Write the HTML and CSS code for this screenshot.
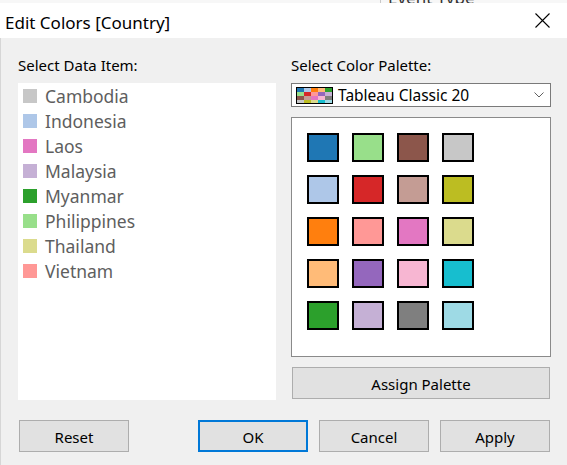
FILE: index.html
```html
<!DOCTYPE html>
<html>
<head>
<meta charset="utf-8">
<link rel="stylesheet" href="styles.css">
</head>
<body>
<div class="behind"><span class="behind-text">Event Type</span></div>
<div class="dialog">
  <div class="titlebar">
    <span class="title">Edit Colors [Country]</span>
    <svg class="close" width="15" height="15" viewBox="0 0 15 15"><path d="M0.5 0.5 L14.5 14.5 M14.5 0.5 L0.5 14.5" stroke="#000" stroke-width="1.1" fill="none"/></svg>
  </div>
  <div class="content">
    <div class="col left">
      <div class="label">Select Data Item:</div>
      <div class="listbox">
        <div class="item"><span class="sw" style="background:#c7c7c7"></span><span>Cambodia</span></div>
        <div class="item"><span class="sw" style="background:#aec7e8"></span><span>Indonesia</span></div>
        <div class="item"><span class="sw" style="background:#e377c2"></span><span>Laos</span></div>
        <div class="item"><span class="sw" style="background:#c5b0d5"></span><span>Malaysia</span></div>
        <div class="item"><span class="sw" style="background:#2ca02c"></span><span>Myanmar</span></div>
        <div class="item"><span class="sw" style="background:#98df8a"></span><span>Philippines</span></div>
        <div class="item"><span class="sw" style="background:#dbdb8d"></span><span>Thailand</span></div>
        <div class="item"><span class="sw" style="background:#ff9896"></span><span>Vietnam</span></div>
      </div>
    </div>
    <div class="col right">
      <div class="label">Select Color Palette:</div>
      <div class="dropdown">
        <div class="pal-icon">
          <i style="background:#1f77b4"></i><i style="background:#aec7e8"></i><i style="background:#ff7f0e"></i><i style="background:#ffbb78"></i><i style="background:#2ca02c"></i>
          <i style="background:#98df8a"></i><i style="background:#d62728"></i><i style="background:#ff9896"></i><i style="background:#9467bd"></i><i style="background:#c5b0d5"></i>
          <i style="background:#8c564b"></i><i style="background:#c49c94"></i><i style="background:#e377c2"></i><i style="background:#f7b6d2"></i><i style="background:#7f7f7f"></i>
          <i style="background:#c7c7c7"></i><i style="background:#bcbd22"></i><i style="background:#dbdb8d"></i><i style="background:#17becf"></i><i style="background:#9edae5"></i>
        </div>
        <span class="dd-text">Tableau Classic 20</span>
        <svg class="chev" width="10" height="6" viewBox="0 0 10 6"><path d="M0.5 0.5 L5 5 L9.5 0.5" stroke="#606060" stroke-width="1" fill="none"/></svg>
      </div>
      <div class="palette">
        <div class="grid">
          <span class="cell" style="background:#1f77b4"></span>
          <span class="cell" style="background:#aec7e8"></span>
          <span class="cell" style="background:#ff7f0e"></span>
          <span class="cell" style="background:#ffbb78"></span>
          <span class="cell" style="background:#2ca02c"></span>
          <span class="cell" style="background:#98df8a"></span>
          <span class="cell" style="background:#d62728"></span>
          <span class="cell" style="background:#ff9896"></span>
          <span class="cell" style="background:#9467bd"></span>
          <span class="cell" style="background:#c5b0d5"></span>
          <span class="cell" style="background:#8c564b"></span>
          <span class="cell" style="background:#c49c94"></span>
          <span class="cell" style="background:#e377c2"></span>
          <span class="cell" style="background:#f7b6d2"></span>
          <span class="cell" style="background:#7f7f7f"></span>
          <span class="cell" style="background:#c7c7c7"></span>
          <span class="cell" style="background:#bcbd22"></span>
          <span class="cell" style="background:#dbdb8d"></span>
          <span class="cell" style="background:#17becf"></span>
          <span class="cell" style="background:#9edae5"></span>
        </div>
      </div>
      <div class="btn assign">Assign Palette</div>
    </div>
  </div>
  <div class="buttons">
    <div class="btn reset">Reset</div>
    <div class="spacer"></div>
    <div class="btn ok">OK</div>
    <div class="btn">Cancel</div>
    <div class="btn">Apply</div>
  </div>
</div>
</body>
</html>
```
FILE: styles.css
```css
* { box-sizing: border-box; }
html, body { margin: 0; padding: 0; }
body {
  width: 567px;
  height: 465px;
  overflow: hidden;
  background: #f0f0f0;
  font-family: "Noto Sans", "Open Sans", sans-serif;
  color: #000;
}
.behind {
  height: 3px;
  overflow: hidden;
  background: #f7f7f7;
  display: flex;
  align-items: flex-end;
  padding-left: 380px;
}
.behind-text {
  border-left: 1px solid #c8c8c8;
  padding-left: 7px;
  font-size: 17px;
  line-height: 17px;
  color: #333;
  margin-bottom: -3px;
  height: 17px;
}
.dialog {
  height: 462px;
  box-shadow: inset 1px 0 0 #d6d6d6;
}
.titlebar {
  height: 35px;
  background: #fff;
  display: flex;
  align-items: center;
  justify-content: space-between;
  padding: 4px 17px 0 5px;
}
.title {
  font-size: 17px;
  line-height: 22px;
}
.close { margin-top: -4px; display: block; }
.content {
  display: grid;
  grid-template-columns: 258px 260px;
  column-gap: 15px;
  padding: 17px 0 0 18px;
}
.col { display: flex; flex-direction: column; }
.label {
  font-size: 15px;
  line-height: 20px;
  height: 20px;
  margin-bottom: 8px;
}
.listbox {
  background: #fff;
  height: 317px;
  padding: 0 0 0 5px;
}
.item {
  height: 25px;
  display: flex;
  align-items: center;
  font-size: 17.5px;
  line-height: 20px;
  color: #5e5e5e;
}
.sw {
  width: 14px;
  height: 14px;
  margin-right: 8px;
  flex: none;
}
.dropdown {
  height: 24px;
  border: 1px solid #7a7a7a;
  background: #fff;
  display: flex;
  align-items: center;
  padding-left: 4px;
}
.pal-icon {
  width: 37px;
  height: 17px;
  border: 1px solid #000;
  display: grid;
  grid-template-columns: repeat(5, 7px);
  grid-template-rows: 4px 4px 4px 3px;
  flex: none;
}
.pal-icon i { display: block; }
.dd-text {
  font-size: 15.5px;
  line-height: 20px;
  margin-left: 5px;
  flex: 1;
}
.chev { margin-right: 6px; display: block; }
.palette {
  margin-top: 10px;
  height: 240px;
  border: 1px solid #8a8a8a;
  background: #fff;
  padding: 15px 0 0 15px;
}
.grid {
  display: grid;
  grid-auto-flow: column;
  grid-template-rows: repeat(5, 29px);
  grid-auto-columns: 32px;
  column-gap: 13px;
  row-gap: 13px;
}
.cell {
  border: 2px solid #000;
  display: block;
}
.btn {
  height: 32px;
  background: #e1e1e1;
  border: 1px solid #adadad;
  display: flex;
  align-items: center;
  justify-content: center;
  font-size: 15px;
  line-height: 20px;
  width: 110px;
  padding-top: 1px;
}
.assign {
  width: auto;
  margin: 10px 1px 0 1px;
}
.buttons {
  display: flex;
  margin-top: 20px;
  padding: 0 17px 0 19px;
  gap: 11px;
}
.spacer { flex: 1; margin-left: -11px; }
.ok { border: 2px solid #0078d7; }
```
